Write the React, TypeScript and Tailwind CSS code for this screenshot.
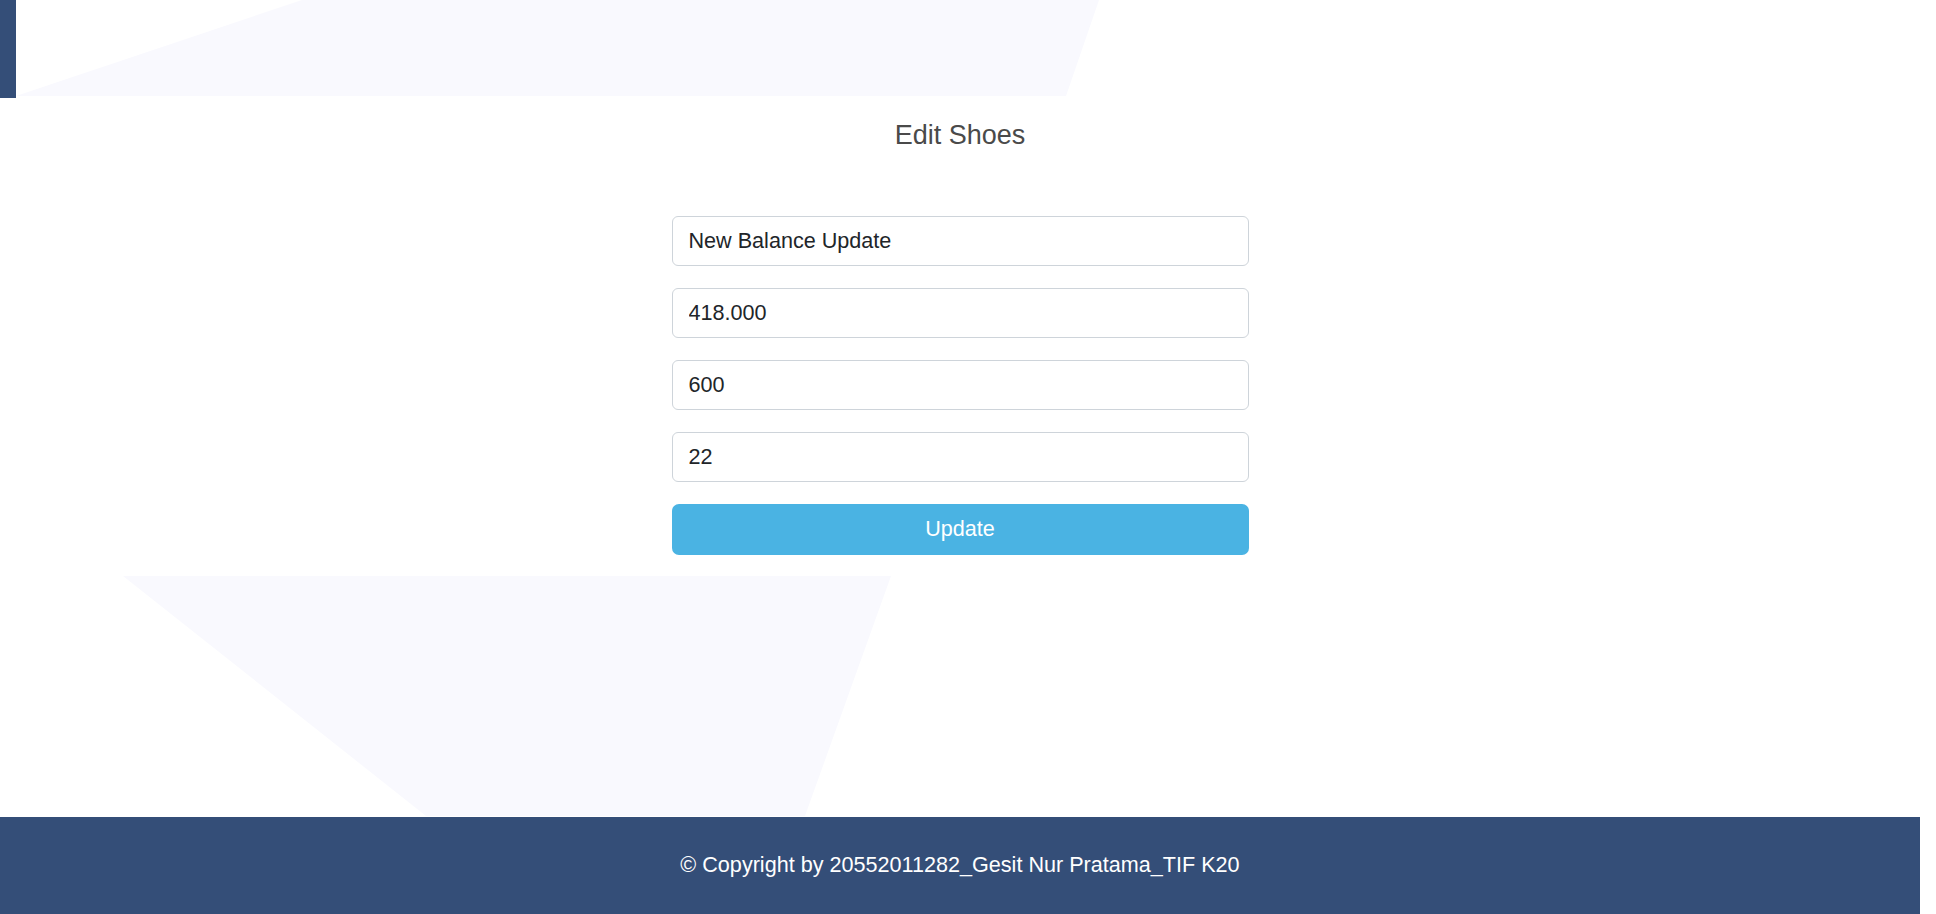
export default function App() {
  const fields = ["New Balance Update", "418.000", "600", "22"];
  return (
    <div className="w-[1936px] h-[914px] bg-white overflow-hidden font-['Liberation_Sans',Arial,sans-serif]">
      <div className="w-[1920px] h-full flex flex-col">
        {/* header band */}
        <header className="relative h-[96px] shrink-0">
          <svg className="absolute inset-0" width="1920" height="96" viewBox="0 0 1920 96">
            <polygon points="16,96 302,0 1099,0 1066,96" fill="#f9f9fe" />
          </svg>
          <div className="absolute left-0 top-0 w-[16px] h-[98px] bg-[#344e78]" />
        </header>

        {/* content */}
        <main className="relative flex-1">
          <svg className="absolute left-0 top-0" width="1920" height="720" viewBox="0 0 1920 720">
            <polygon points="123,480 891,480 805,720 426,720" fill="#f9f9fe" />
          </svg>
          <div className="relative flex flex-col items-center pt-[23px]">
            <h3 className="text-[27px] leading-[32px] text-[#4a4a4a] font-normal">Edit Shoes</h3>
            <form className="mt-[65px] w-[577px] flex flex-col gap-[22px]">
              {fields.map((v) => (
                <input
                  key={v}
                  defaultValue={v}
                  className="h-[50px] w-full px-[16px] bg-white border border-[#ced4da] rounded-[6px] text-[21.6px] text-[#212529] outline-none"
                />
              ))}
              <button
                type="button"
                className="h-[51px] w-full rounded-[7px] bg-[#4ab3e3] text-white text-[21.6px]"
              >
                Update
              </button>
            </form>
          </div>
        </main>

        {/* footer */}
        <footer className="h-[97px] shrink-0 bg-[#344e78] flex items-center justify-center text-white text-[21.6px]">
          © Copyright by 20552011282_Gesit Nur Pratama_TIF K20
        </footer>
      </div>
    </div>
  );
}
